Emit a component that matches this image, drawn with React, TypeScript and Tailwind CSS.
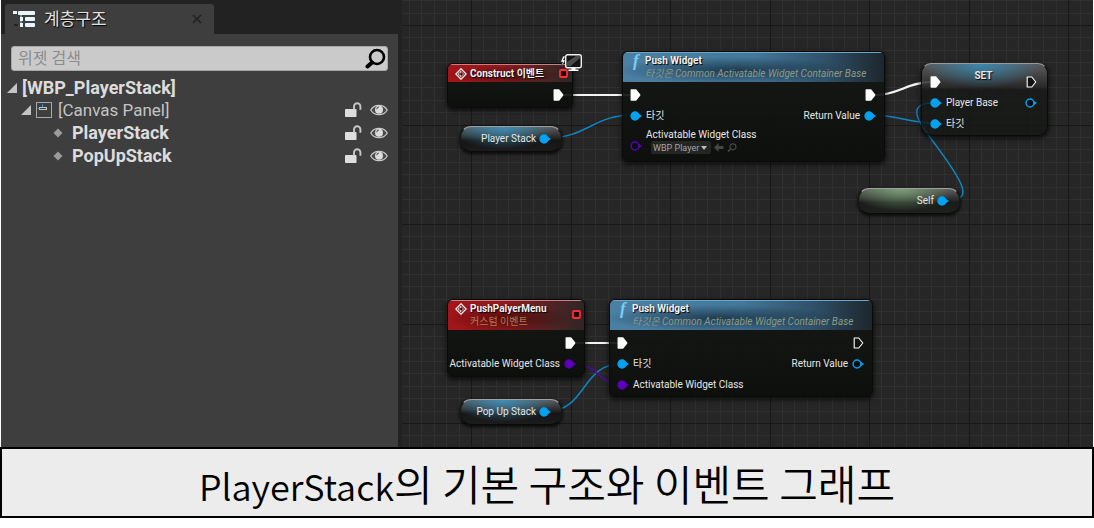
import React from "react";

const BLUE = "#00a2f2";
const PURPLE = "#5b00b8";

/* ---------- icons ---------- */

function HierarchyIcon() {
  return (
    <svg width="22" height="18" viewBox="0 0 22 18" aria-hidden="true">
      <g fill="#e8f6fb">
        <rect x="0" y="1" width="4" height="3" />
        <rect x="5" y="1" width="17" height="4" rx="1" />
        <rect x="7" y="7" width="3" height="4" />
        <rect x="12" y="7" width="10" height="4" rx="1" />
        <rect x="7" y="13" width="3" height="4" />
        <rect x="12" y="13" width="10" height="4" rx="1" />
      </g>
      <path d="M8 5v2M8 11v2" stroke="#9fd0e0" strokeWidth="1" />
      <rect x="1" y="14" width="4" height="2" fill="#222" />
    </svg>
  );
}

function SearchIcon() {
  return (
    <svg width="22" height="22" viewBox="0 0 22 22" fill="none" stroke="#000" aria-hidden="true">
      <circle cx="12" cy="9" r="7" strokeWidth="2.600" />
      <path d="M7 14.500 2.500 18.500" strokeWidth="4" strokeLinecap="round" />
    </svg>
  );
}

function UnlockIcon() {
  return (
    <svg width="18" height="16" viewBox="0 0 18 16" aria-hidden="true">
      <rect x="1" y="7" width="11.500" height="8" rx="0.800" fill="#dedede" />
      <path d="M10 7.500V4.500a3.200 3.200 0 0 1 6.400 0v3.200" fill="none" stroke="#c6c6c6" strokeWidth="1.900" />
    </svg>
  );
}

function EyeIcon() {
  return (
    <svg width="18" height="12" viewBox="0 0 18 12" aria-hidden="true">
      <path d="M0.800 6C4 -0.200 14 -0.200 17.200 6 14 12.200 4 12.200 0.800 6Z" fill="#4a4a4a" stroke="#c8c8c8" strokeWidth="1.300" />
      <circle cx="9" cy="5.700" r="4" fill="#dcdcdc" />
      <path d="M6.700 5.200A2.400 2.400 0 0 1 9 3" fill="none" stroke="#555" strokeWidth="1.100" />
    </svg>
  );
}

function Arrow() {
  return (
    <svg width="10" height="10" viewBox="0 0 10 10" aria-hidden="true">
      <path d="M10 0V10H0Z" fill="#c4c4c4" />
    </svg>
  );
}

function PanelIcon() {
  return (
    <svg width="17" height="17" viewBox="0 0 17 17" fill="none" aria-hidden="true">
      <rect x="0.500" y="0.500" width="15" height="15" stroke="#a8a8a8" />
      <rect x="3.500" y="5.500" width="7" height="2" stroke="#c5c5c5" />
      <path d="M1.500 6.500h2M6.500 2v3" stroke="#2f8fe0" />
    </svg>
  );
}

function EventIcon() {
  return (
    <svg width="12" height="12" viewBox="0 0 12 12" fill="none" stroke="#f4eaea" aria-hidden="true">
      <path d="M6 .8 11.200 6 6 11.200.8 6Z" strokeWidth="1.300" />
      <path d="M3.500 5H5.500V3L8.500 6 5.500 9V7H3.500Z" fill="#3a0808" stroke="#f4eaea" strokeWidth=".7" />
    </svg>
  );
}

function DelegatePin() {
  return (
    <svg width="9" height="9" viewBox="0 0 9 9" aria-hidden="true">
      <rect x="1" y="1" width="7" height="7" rx="1" fill="#240505" stroke="#ff2d2d" strokeWidth="1.800" />
    </svg>
  );
}

function ExecPin({ filled = false }: { filled?: boolean }) {
  return (
    <svg width="11" height="12" viewBox="0 0 11 12" aria-hidden="true">
      <path
        d="M1.200 1H5.800L9.800 6 5.800 11H1.200Z"
        fill={filled ? "#fff" : "#111"}
        stroke="#fff"
        strokeWidth={filled ? "1.300" : "1.100"}
        strokeLinejoin="round"
      />
    </svg>
  );
}

function DataPin({ color = BLUE, filled = false }: { color?: string; filled?: boolean }) {
  return (
    <svg width="12" height="10" viewBox="0 0 12 10" aria-hidden="true">
      <path d="M9 3l3 2-3 2z" fill={color} />
      <circle cx="5" cy="5" r="3.900" fill={filled ? color : "#0b0e10"} stroke={color} strokeWidth="1.500" />
    </svg>
  );
}

function ClientOnlyBadge() {
  return (
    <svg width="24" height="20" viewBox="0 0 24 20" aria-hidden="true">
      <path d="M4 3 1.500 9h2L2 15l4.500-8H4.500L6.500 3Z" fill="#fff" stroke="#111" strokeWidth=".6" />
      <rect x="6.700" y="1.700" width="15.600" height="13" rx="2" fill="#141414" stroke="#f2f2f2" strokeWidth="1.400" />
      <path d="M8 13V9L17 3h4v2L11 13.500Z" fill="#4a4a4a" />
      <path d="M12.500 15h4v1.500h3V18h-10v-1.500h3z" fill="#fff" />
    </svg>
  );
}

/* ---------- hierarchy panel ---------- */

function RowActions({ name }: { name: string }) {
  return (
    <span className="ml-auto flex items-center gap-2">
      <button type="button" aria-label={`${name} lock`} className="block">
        <UnlockIcon />
      </button>
      <button type="button" aria-label={`${name} visibility`} className="block">
        <EyeIcon />
      </button>
    </span>
  );
}

function Leaf({ name }: { name: string }) {
  return (
    <li className="flex h-[23px] items-center pl-[46px] text-lg leading-[22px] font-bold">
      <svg width="10" height="10" viewBox="0 0 10 10" className="mr-[9px]" aria-hidden="true">
        <path d="M5 .5 9.500 5 5 9.500.5 5Z" fill="#9b9b9b" />
      </svg>
      {name}
      <RowActions name={name} />
    </li>
  );
}

function HierarchyPanel() {
  return (
    <aside className="flex w-[401px] shrink-0 flex-col border-r-4 border-[#222] bg-[#3e3e3e]">
      <div className="flex h-[34px] items-end bg-[#222] pl-1">
        <div className="flex h-[30px] w-[209px] items-center rounded-t-[3px] bg-[#3e3e3e] pr-3 pl-2">
          <HierarchyIcon />
          <h2 className="ml-[9px] text-[17px] leading-6 text-[#e0e0e0] [text-shadow:1px_1px_1px_#000]">계층구조</h2>
          <button type="button" aria-label="Close tab" className="ml-auto">
            <svg width="10" height="10" viewBox="0 0 10 10" stroke="#202020" strokeWidth="1.500" aria-hidden="true">
              <path d="M1 1l8 8M9 1 1 9" />
            </svg>
          </button>
        </div>
      </div>
      <label className="mx-[10px] mt-3 flex h-[25px] items-center rounded-[3px] border border-[#a8a8a8] bg-[#cacaca] pl-[6px]">
        <input
          type="text"
          aria-label="위젯 검색"
          placeholder="위젯 검색"
          className="min-w-0 flex-1 bg-transparent text-base text-black outline-none placeholder:text-[#8c8c8c]"
        />
        <SearchIcon />
      </label>
      <ul className="mt-[6px] pr-[10px] pl-[6px] text-[17px] leading-[22px] text-[#dcdcdc]">
        <li className="flex h-[22px] items-center text-lg leading-[22px] font-bold">
          <span className="mr-[5px]"><Arrow /></span>
          [WBP_PlayerStack]
        </li>
        <li className="flex h-[22px] items-center pl-[14px] text-[#c4c4c4]">
          <span className="mr-[5px]"><Arrow /></span>
          <span className="mr-[5px]"><PanelIcon /></span>
          [Canvas Panel]
          <RowActions name="Canvas Panel" />
        </li>
        <Leaf name="PlayerStack" />
        <Leaf name="PopUpStack" />
      </ul>
    </aside>
  );
}

/* ---------- graph ---------- */

const GRID = 99.5 / 8;

function Grid() {
  const lines = Array.from({ length: 240 }, (_, i) => i);
  const minor = lines.filter((i) => i % 8 !== 0);
  const major = lines.filter((i) => i % 8 === 0);
  const gx = (i: number) => Math.round(69 - 8 * GRID + i * GRID);
  const gy = (i: number) => Math.round(25 - 8 * GRID + i * GRID);
  const draw = (i: number, color: string) => (
    <g key={i} fill={color}>
      <rect x={gx(i)} y="0" width="1" height="100%" />
      <rect x="0" y={gy(i)} width="100%" height="1" />
    </g>
  );
  return (
    <svg className="absolute inset-0 h-full w-full" aria-hidden="true">
      {minor.map((i) => draw(i, "#303030"))}
      {major.map((i) => draw(i, "#181818"))}
    </svg>
  );
}

function Wires() {
  return (
    <svg width="692" height="447" viewBox="402 0 692 447" fill="none" className="absolute top-0 left-0" aria-hidden="true">
      <g stroke="#f4f4f4" strokeWidth="2.200">
        <path d="M564 95H632" />
        <path d="M876 95C898 95 908 82 932 82" />
        <path d="M576 343H620" />
      </g>
      <g stroke="#0f86c4" strokeWidth="1.500">
        <path d="M548 138C586 138 594 115 632 115" />
        <path d="M874 115C894 115 912 123 932 123" />
        <path d="M946 200C962 200 966 196 961 184C952 164 932 142 921 124C913 111 916 103 932 103" />
        <path d="M548 411C586 411 582 364 620 364" />
      </g>
      <path d="M574 364C598 364 598 384 620 384" stroke="#4b0a96" strokeWidth="1.500" />
    </svg>
  );
}

const nodeFrame =
  "absolute overflow-hidden rounded-md border border-[#0a0a0a] bg-[linear-gradient(#151714e8,#0b0e0bf0)] shadow-[0_2px_4px_1px_rgba(0,0,0,0.6)]";

const eventHeader =
  "flex border-t border-[#c98080] bg-[radial-gradient(ellipse_at_45%_60%,rgba(30,0,0,0.5),transparent_60%),linear-gradient(to_right,#a51519,#8c1a1d_45%,#4a2425_80%,#2e2626)] pl-[7px]";

const functionHeader =
  "flex h-[30px] border-t border-[#6fa6c8] bg-[radial-gradient(ellipse_at_42%_60%,rgba(10,25,38,0.65),transparent_55%),linear-gradient(to_right,#4b80a4,#44789b_50%,#2f5068_78%,#1d262c)] pl-[10px]";

function Row({ left, right }: { left?: React.ReactNode; right?: React.ReactNode }) {
  return (
    <div className="flex h-[21px] items-center justify-between">
      <div className="flex items-center gap-1">{left}</div>
      <div className="flex items-center gap-1">{right}</div>
    </div>
  );
}

function FunctionHeader() {
  return (
    <header className={functionHeader}>
      <span className="w-[12px] font-['Liberation_Serif'] text-[17px] leading-[15px] font-bold text-[#79cdf7] italic">f</span>
      <div className="pt-px text-[10px] leading-[13px]">
        <h3 className="font-bold text-[#f0f0f0] [text-shadow:1px_1px_1px_#000]">Push Widget</h3>
        <p className="text-[#8d9a83] italic">타깃은 Common Activatable Widget Container Base</p>
      </div>
    </header>
  );
}

function Pill({ place, label, tint }: { place: string; label: string; tint: string }) {
  return (
    <div
      className={`absolute flex h-[26px] w-[102px] items-center justify-end gap-[3px] rounded-[11px] border border-t-[#a0a0a0] border-r-[#151515] border-b-[#0a0a0a] border-l-[#151515] pr-[10px] shadow-[0_1px_3px_1px_rgba(0,0,0,0.7)] ${tint} ${place}`}
    >
      <span>{label}</span>
      <DataPin filled />
    </div>
  );
}

const blueTint =
  "bg-[radial-gradient(ellipse_at_42%_0%,rgba(60,150,195,0.85),transparent_65%),linear-gradient(#5a5a5a,#262626_45%,#151515_55%,#1c1c1c)]";
const greenTint =
  "bg-[radial-gradient(ellipse_at_42%_0%,rgba(130,175,125,0.8),transparent_65%),linear-gradient(#5a5a5a,#2a2a2a_45%,#191b19_55%,#1e211e)]";

function Graph() {
  return (
    <section
      aria-label="Event graph"
      className="relative min-w-0 flex-1 overflow-hidden bg-[#262626] text-[10px] leading-3 text-[#e6e6e6]"
    >
      <Grid />
      <Wires />

      <article className={`${nodeFrame} top-[63px] left-[45px] h-[45px] w-[126px]`}>
        <header className={`${eventHeader} h-[18px] items-center`}>
          <EventIcon />
          <h3 className="ml-[3px] font-bold text-[#f0f0f0] [text-shadow:1px_1px_1px_#000]">Construct 이벤트</h3>
          <span className="mr-1 ml-auto"><DelegatePin /></span>
        </header>
        <div className="pt-[2px] pr-2">
          <Row right={<ExecPin filled />} />
        </div>
      </article>
      <div className="absolute top-[53px] left-[157px]">
        <ClientOnlyBadge />
      </div>

      <Pill place="top-[126px] left-[58px]" label="Player Stack" tint={blueTint} />

      <article className={`${nodeFrame} top-[51px] left-[220px] h-[111px] w-[263px]`}>
        <FunctionHeader />
        <div className="pt-[2px] pr-2 pl-[7px]">
          <Row left={<ExecPin filled />} right={<ExecPin filled />} />
          <Row left={<><DataPin filled /><span>타깃</span></>} right={<><span>Return Value</span><DataPin filled /></>} />
          <div className="flex items-center gap-1">
            <span className="pt-3"><DataPin color={PURPLE} /></span>
            <div className="pt-[3px]">
              <label htmlFor="widget-class" className="block">Activatable Widget Class</label>
              <div className="flex items-center gap-[3px] pl-[5px]">
                <span className="flex h-[13px] items-center rounded-[2px] bg-[#242624] pr-1 pl-[2px]">
                  <select
                    id="widget-class"
                    className="w-[48px] appearance-none bg-transparent text-[9px] leading-3 text-[#a4a4a4]"
                  >
                    <option>WBP Player</option>
                  </select>
                  <svg width="6" height="4" viewBox="0 0 6 4" aria-hidden="true"><path d="M0 0h6L3 4z" fill="#bdbdbd" /></svg>
                </span>
                <button type="button" aria-label="Use selected asset">
                  <svg width="10" height="9" viewBox="0 0 10 9" aria-hidden="true"><path d="M0 4.500 4.500 0v3H9.500v3H4.500v3z" fill="#454745" /></svg>
                </button>
                <button type="button" aria-label="Browse to asset">
                  <svg width="10" height="9" viewBox="0 0 10 9" fill="none" stroke="#454745" aria-hidden="true">
                    <circle cx="6" cy="3.800" r="3" strokeWidth="1.200" />
                    <path d="M3.500 6 1 8.500" strokeWidth="1.700" />
                  </svg>
                </button>
              </div>
            </div>
          </div>
        </div>
      </article>

      <article className="absolute top-[63px] left-[519px] h-[73px] w-[127px] rounded-[10px] border border-t-[#9a9a9a] border-r-[#0a0a0a] border-b-[#0a0a0a] border-l-[#0a0a0a] bg-[radial-gradient(ellipse_60px_24px_at_48%_0%,rgba(50,150,200,0.75),transparent),linear-gradient(#626262e0,#2c2c2ce0_22px,#151715c0_26px,#141714d0)] pr-[10px] pl-[8px] shadow-[0_2px_4px_1px_rgba(0,0,0,0.6)]">
        <div className="flex h-7 items-end justify-between">
          <span className="flex h-5 items-center"><ExecPin filled /></span>
          <h3 className="self-start pt-[6px] font-bold [text-shadow:1px_1px_1px_#000]">SET</h3>
          <span className="flex h-5 items-center"><ExecPin /></span>
        </div>
        <Row left={<><DataPin filled /><span>Player Base</span></>} right={<DataPin />} />
        <Row left={<><DataPin filled /><span>타깃</span></>} />
      </article>

      <Pill place="top-[188px] left-[456px]" label="Self" tint={greenTint} />

      <article className={`${nodeFrame} top-[299px] left-[45px] h-[78px] w-[138px]`}>
        <header className={`${eventHeader} h-[30px]`}>
          <span className="pt-[2px]"><EventIcon /></span>
          <div className="ml-[3px] pt-px leading-[13px]">
            <h3 className="font-bold text-[#f0f0f0] [text-shadow:1px_1px_1px_#000]">PushPalyerMenu</h3>
            <p className="text-[#b07a4c]">커스텀 이벤트</p>
          </div>
          <span className="mr-[3px] ml-auto pt-[9px]"><DelegatePin /></span>
        </header>
        <div className="pt-[2px] pr-2">
          <Row right={<ExecPin filled />} />
          <Row right={<><span>Activatable Widget Class</span><DataPin color={PURPLE} filled /></>} />
        </div>
      </article>

      <Pill place="top-[399px] left-[58px]" label="Pop Up Stack" tint={blueTint} />

      <article className={`${nodeFrame} top-[299px] left-[207px] h-[98px] w-[264px]`}>
        <FunctionHeader />
        <div className="pt-[2px] pr-2 pl-[7px]">
          <Row left={<ExecPin filled />} right={<ExecPin />} />
          <Row left={<><DataPin filled /><span>타깃</span></>} right={<><span>Return Value</span><DataPin /></>} />
          <Row left={<><DataPin color={PURPLE} filled /><span>Activatable Widget Class</span></>} />
        </div>
      </article>
    </section>
  );
}

export default function App() {
  return (
    <main className="w-full bg-white font-[Roboto,'Noto_Sans_CJK_KR',sans-serif]">
      <div className="flex h-[447px] px-px">
        <HierarchyPanel />
        <Graph />
      </div>
      <h1 className="border-2 border-black bg-[#ececec] py-[9px] text-center font-['Noto_Sans_CJK_KR',sans-serif] text-[42px] leading-[49px] font-[350] text-black">
        <span className="text-[36px] leading-9">PlayerStack</span>의 기본 구조와 이벤트 그래프
      </h1>
    </main>
  );
}
